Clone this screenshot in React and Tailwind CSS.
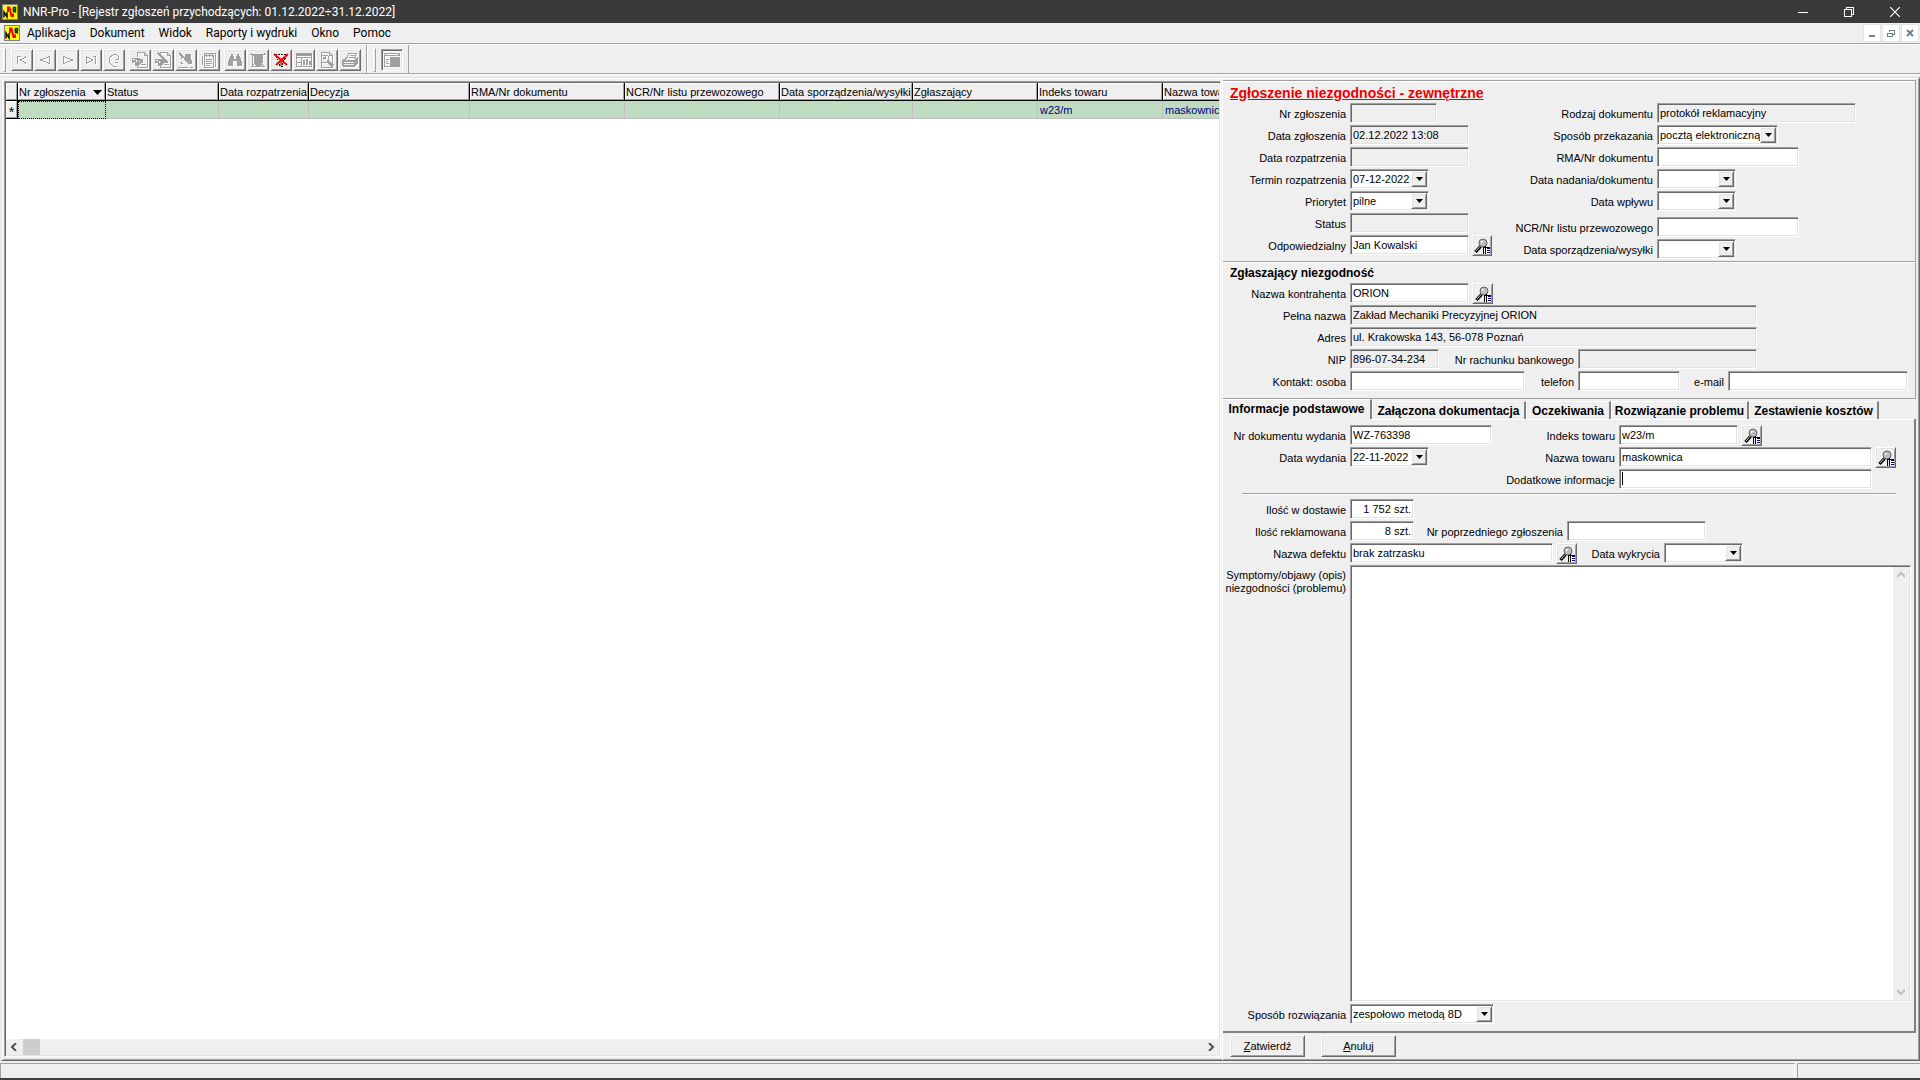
import React, { useId } from 'react';
import clsx from 'clsx';

const sunken =
  'border border-t-[#a0a0a0] border-l-[#a0a0a0] border-b-white border-r-white shadow-[inset_1px_1px_#696969,inset_-1px_-1px_#e3e3e3]';
const raised =
  'border border-t-white border-l-white border-b-[#696969] border-r-[#696969] shadow-[inset_1px_1px_#e3e3e3,inset_-1px_-1px_#a0a0a0]';

const menu = ['Aplikacja', 'Dokument', 'Widok', 'Raporty i wydruki', 'Okno', 'Pomoc'];

const columns = [
  { name: 'Nr zgłoszenia', width: 'w-[88px]', sorted: true },
  { name: 'Status', width: 'w-[113px]' },
  { name: 'Data rozpatrzenia', width: 'w-[90px]' },
  { name: 'Decyzja', width: 'w-[161px]' },
  { name: 'RMA/Nr dokumentu', width: 'w-[155px]' },
  { name: 'NCR/Nr listu przewozowego', width: 'w-[155px]' },
  { name: 'Data sporządzenia/wysyłki', width: 'w-[133px]' },
  { name: 'Zgłaszający', width: 'w-[125px]' },
  { name: 'Indeks towaru', width: 'w-[125px]', value: 'w23/m' },
  { name: 'Nazwa towaru', width: 'w-[125px]', value: 'maskownica' },
];

const tabs = [
  { name: 'Informacje podstawowe', width: 'w-[149px]' },
  { name: 'Załączona dokumentacja', width: 'w-[154px]' },
  { name: 'Oczekiwania', width: 'w-[85px]' },
  { name: 'Rozwiązanie problemu', width: 'w-[138px]' },
  { name: 'Zestawienie kosztów', width: 'w-[130px]' },
];

/* ---------- icons ---------- */

function Glyph({ children, className }) {
  return (
    <svg
      viewBox="0 0 16 16"
      className={clsx('h-4 w-4 shrink-0', className)}
      fill="none"
      stroke="currentColor"
      shapeRendering="crispEdges"
      aria-hidden="true"
    >
      {children}
    </svg>
  );
}

function AppIcon() {
  return (
    <svg viewBox="0 0 16 16" className="h-4 w-4 shrink-0" aria-hidden="true">
      <rect x=".5" y=".5" width="15" height="15" fill="#ffff00" stroke="#808080" />
      <path d="M2 13.500V8l3 5V8" fill="none" stroke="#000" strokeWidth="1.400" />
      <path d="M6 8V3.500h1.500l2 8.500h1.500V9.500" fill="none" stroke="#f00" strokeWidth="2" />
      <path d="M11.500 8.500V3.500h2v2.500h-2l2.500 2.500" fill="none" stroke="#003800" strokeWidth="1.500" />
    </svg>
  );
}

const toolIcons = {
  first: <path d="M3.500 4v8M12.500 4.500L6.500 8l6 3.500M3.500 4.500h3" />,
  prev: <path d="M12.500 4.500L3.500 8l9 3.500z" />,
  next: <path d="M3.500 4.500l9 3.500-9 3.500z" />,
  last: <path d="M12.500 4v8M3.500 4.500L9.500 8l-6 3.500zM9.500 4.500h3" />,
  refresh: <path d="M10.500 14.500H7.500L3.500 10.500V5.500L7.500 2.500h3l2 2v3M9.500 7.500h3.500M8.500 10.500h3" />,
  add: (
    <>
      <path d="M5.500 5V.5h7l3 3v12h-10V13M12.500 .5v3h3M9 12.500h5" />
      <path d="M0 6h8v1h3v4H9l-2 3H3v-3H0z" fill="currentColor" stroke="none" />
      <path d="M1 7h2v1H1zM4 8h1v2H4zM2 10h1v1H2zM7 9h1v1H7z" fill="#fff" stroke="none" />
    </>
  ),
  edit: (
    <>
      <path d="M5.500 5V.5h7l3 3v12h-10V13M12.500 .5v3h3M9 12.500h5" />
      <path d="M0 7h8v1h3v3H9l-2 3H3v-3H0z" fill="currentColor" stroke="none" />
      <path d="M3 1l10 10" strokeWidth="2" />
      <path d="M1 8h2v1H1zM4 9h1v2H4z" fill="#fff" stroke="none" />
    </>
  ),
  erase: (
    <>
      <path d="M1 1l11 10" strokeWidth="2" />
      <path d="M7 2h6v5l1 2v3h-4L6 8z" fill="currentColor" stroke="none" />
      <path d="M3 4v3M2 10l3 2M0 15.500h10M12 15.500h3" />
    </>
  ),
  notes: (
    <path d="M3.500 3.500h9v12h-9zM3.500 3V1.500h11v13M5.500 1v4M8.500 1v4M11.500 1v4M5 7.500h6M5 9.500h6M5 11.500h6M5 13.500h4M1.500 4v9" />
  ),
  find: (
    <path
      d="M4 2h2v2h1v3h2V4h1V2h2v2h1v2h1v3h1v5h-5V9H6v5H1V9h1V6h1V4h1z"
      fill="currentColor"
      stroke="none"
    />
  ),
  filter: (
    <>
      <path d="M0 2.500h16M1 14.500h14M2.500 2v12" />
      <path d="M4 3h9v7l-2 4H6l-2-4z" fill="currentColor" stroke="none" />
      <path d="M1 1l14 14M15 1L1 15" />
    </>
  ),
  table: (
    <>
      <path d="M.5 1.500h15v13H.5zM0 5.500h16M5.500 6v9M0 10.500h5" />
      <path d="M7 8h2v5H7zM10 7h2v6h-2zM13 9h2v4h-2zM1 2h14v2H1z" fill="currentColor" stroke="none" />
    </>
  ),
  preview: (
    <>
      <path d="M2.500 .5h8l3 3v12h-11zM10.500 .5v3h3" />
      <circle cx="6" cy="7" r="4" />
      <path d="M8 9l6 5" strokeWidth="3" />
      <path d="M4 7l3-2" strokeWidth="2" />
    </>
  ),
  print: (
    <>
      <path d="M4.500 7l2-5.500h8L12.500 7M8 3.500h5M7 5.500h5" />
      <path d="M0 8l4-2v2h8l4-3v6l-3 4H2l-2-1z" fill="currentColor" stroke="none" />
      <path d="M2 10.500h10M2 12.500h10" stroke="#efefef" />
    </>
  ),
};

const toolGroups = [
  [
    ['first', 'Pierwszy'],
    ['prev', 'Poprzedni'],
    ['next', 'Następny'],
    ['last', 'Ostatni'],
    ['refresh', 'Odśwież'],
  ],
  [
    ['add', 'Dodaj'],
    ['edit', 'Edytuj'],
    ['erase', 'Usuń'],
    ['notes', 'Notatki'],
  ],
  [
    ['find', 'Szukaj'],
    ['filter', 'Filtr'],
    ['clear', 'Wyłącz filtr'],
    ['table', 'Zestawienie'],
    ['preview', 'Podgląd'],
    ['print', 'Drukuj'],
  ],
];

function ClearFilterIcon() {
  return (
    <Glyph>
      <path d="M2 2.500h12M3.500 4v2l3 4v4h3v-4l3-4V4" stroke="#000" strokeDasharray="2 1" />
      <path d="M7 9h2v5H7z" fill="#808080" stroke="none" />
      <path d="M1 2l13 11M15 2L3 13" stroke="#f00" strokeWidth="2" shapeRendering="auto" />
    </Glyph>
  );
}

function LookupIcon() {
  return (
    <Glyph>
      <path d="M6.500 8.500L1.500 14" stroke="#000" strokeWidth="3.200" shapeRendering="auto" />
      <path d="M6 8.500L2 13" stroke="#d0d0d0" shapeRendering="auto" />
      <circle cx="9" cy="5" r="4" fill="#bdbdbd" stroke="#606060" shapeRendering="auto" />
      <path d="M7 5V3.500h2" stroke="#fff" />
      <path d="M9.500 9v7M11.500 8v8M9 9.500h7" stroke="#000" />
      <path d="M12 10h4v6h-4z" fill="#fff" stroke="none" />
      <path d="M13 10.500h3M13 12.500h3M13 14.500h3" stroke="#000080" />
    </Glyph>
  );
}

/* ---------- controls ---------- */

function Label({ htmlFor, width, children }) {
  return (
    <label htmlFor={htmlFor} className={clsx('shrink-0 pt-px text-right whitespace-nowrap', width)}>
      {children}
    </label>
  );
}

function Field({ label, labelWidth = 'w-[123px]', width, value = '', readOnly, right, caret }) {
  const id = useId();
  return (
    <div className="flex h-5 items-center gap-1">
      <Label htmlFor={id} width={labelWidth}>{label}</Label>
      <div className="relative flex">
        <input
          id={id}
          defaultValue={value}
          readOnly={readOnly}
          className={clsx(
            'h-5 px-0.5 pb-px outline-none',
            sunken,
            width,
            readOnly ? 'bg-[#efefef]' : 'bg-white',
            right && 'text-right'
          )}
        />
        {caret && <span className="absolute top-[3px] left-[3px] h-[13px] w-px bg-black" />}
      </div>
    </div>
  );
}

function Combo({ label, labelWidth = 'w-[123px]', width = 'w-[79px]', value = '' }) {
  const id = useId();
  return (
    <div className="flex h-5 items-center gap-1">
      <Label htmlFor={id} width={labelWidth}>{label}</Label>
      <div className="relative flex">
        <select id={id} className={clsx('h-5 appearance-none bg-white pl-0.5 outline-none', sunken, width)}>
          <option>{value}</option>
        </select>
        <span
          className={clsx(
            'pointer-events-none absolute inset-y-0.5 right-0.5 flex w-4 items-center justify-center bg-[#efefef]',
            raised
          )}
        >
          <svg viewBox="0 0 7 4" className="h-1 w-[7px]" aria-hidden="true">
            <path d="M0 0h7L3.500 4z" />
          </svg>
        </span>
      </div>
    </div>
  );
}

function Lookup({ label }) {
  return (
    <button aria-label={label} className={clsx('flex h-[21px] w-[21px] items-center justify-center', raised)}>
      <LookupIcon />
    </button>
  );
}

function Chevron({ d, className }) {
  return (
    <svg viewBox="0 0 8 8" className={clsx('h-2 w-2', className)} fill="none" stroke="currentColor" strokeWidth="2" aria-hidden="true">
      <path d={d} />
    </svg>
  );
}

/* ---------- window parts ---------- */

function TitleBar() {
  return (
    <header className="flex h-[23px] items-center justify-between bg-[#3a3a3a] pr-0.5 pl-0.5 font-[Roboto,sans-serif] text-xs text-white">
      <div className="flex items-center gap-[5px]">
        <AppIcon />
        <h1>NNR-Pro - [Rejestr zgłoszeń przychodzących: 01.12.2022÷31.12.2022]</h1>
      </div>
      <div className="flex">
        <button aria-label="Minimalizuj" className="flex h-5 w-[46px] items-center justify-center">
          <svg viewBox="0 0 10 10" className="h-2.5 w-2.5" stroke="#fff" shapeRendering="crispEdges"><path d="M0 5.500h10" /></svg>
        </button>
        <button aria-label="Przywróć" className="flex h-5 w-[46px] items-center justify-center">
          <svg viewBox="0 0 10 10" className="h-2.5 w-2.5" fill="none" stroke="#fff" shapeRendering="crispEdges"><path d="M.5 2.500h7v7h-7zM2.500 2V.5h7v7H8" /></svg>
        </button>
        <button aria-label="Zamknij" className="flex h-5 w-[46px] items-center justify-center">
          <svg viewBox="0 0 10 10" className="h-2.5 w-2.5" stroke="#fff" strokeWidth="1.200"><path d="M0 0l10 10M10 0L0 10" /></svg>
        </button>
      </div>
    </header>
  );
}

function MenuBar() {
  const child = 'flex h-[18px] w-[18px] items-center justify-center border border-[#e3e3e3] bg-white text-[#6f8094]';
  return (
    <nav className="flex h-[21px] items-center justify-between border-b border-[#a0a0a0] pr-px pl-1 font-[Roboto,sans-serif] text-xs">
      <div className="flex items-center">
        <AppIcon />
        <ul className="flex">
          {menu.map((item) => (
            <li key={item}>
              <button className="px-[7px]">{item}</button>
            </li>
          ))}
        </ul>
      </div>
      <div className="flex gap-px">
        <button aria-label="Minimalizuj okno" className={child}>
          <svg viewBox="0 0 8 8" className="h-2 w-2" fill="currentColor"><path d="M1 6h6v2H1z" /></svg>
        </button>
        <button aria-label="Przywróć okno" className={child}>
          <svg viewBox="0 0 8 8" className="h-2 w-2" fill="none" stroke="currentColor" shapeRendering="crispEdges"><path d="M.5 4h5v3.500h-5zM0 4h6M2.500 3V1h5v4H6" /></svg>
        </button>
        <button aria-label="Zamknij okno" className={child}>
          <svg viewBox="0 0 8 8" className="h-2 w-2" stroke="currentColor" strokeWidth="2"><path d="M1 1l6 6M7 1L1 7" /></svg>
        </button>
      </div>
    </nav>
  );
}

function Grip() {
  return <span className="h-6 w-[3px] border border-t-white border-l-white border-r-[#a0a0a0] border-b-[#a0a0a0]" />;
}

function ToolBar() {
  return (
    <div className="flex h-[30px] items-stretch border-t border-b border-t-white border-b-[#a0a0a0]">
      <div className="flex items-center gap-[5px] border-r border-[#a0a0a0] pt-0.5 pr-[5px] pl-[3px]">
        <Grip />
        <div className="flex gap-1">
          {toolGroups.map((group) => (
            <div key={group[0][0]} className="flex gap-px">
              {group.map(([name, label]) => (
                <button
                  key={name}
                  aria-label={label}
                  className={clsx('flex h-[22px] w-[22px] items-center justify-center text-[#a0a0a0]', raised)}
                >
                  {name === 'clear' ? (
                    <ClearFilterIcon />
                  ) : (
                    <Glyph className="drop-shadow-[1px_1px_0_#fff]">{toolIcons[name]}</Glyph>
                  )}
                </button>
              ))}
            </div>
          ))}
        </div>
      </div>
      <div className="flex items-center gap-[5px] border-l border-r border-l-white border-r-[#a0a0a0] pt-0.5 pr-[5px] pl-[5px]">
        <Grip />
        <button
          aria-label="Formularz"
          className={clsx('flex h-[22px] w-[22px] items-center justify-center bg-[#f7f7f7] text-[#a0a0a0]', sunken)}
        >
          <Glyph>
            <path d="M0 1h16v3H0zM6 5h10v10H6z" fill="currentColor" stroke="none" />
            <path d="M.5 4v10.500H6M2 7.500h3M2 9.500h2M2 11.500h3" />
            <path d="M1 2.500h13" stroke="#fff" />
          </Glyph>
        </button>
      </div>
    </div>
  );
}

function RequestGrid() {
  const head = 'h-[17px] border border-t-white border-l-white border-r-[#a0a0a0] border-b-[#a0a0a0] bg-[#efefef]';
  return (
    <div className={clsx('flex min-w-0 flex-1 flex-col overflow-hidden bg-white p-px', sunken)}>
      <div className="flex-1 overflow-hidden">
        <table className="w-[1282px] table-fixed border-separate border-spacing-0">
          <thead>
            <tr>
              <th className="w-3 border-r border-b border-black p-0">
                <div className={head} />
              </th>
              {columns.map((col) => (
                <th
                  key={col.name}
                  className={clsx('overflow-hidden border-r border-b border-black p-0 font-normal', col.width)}
                >
                  <div className={clsx('flex items-center justify-between pt-px pr-0.5 whitespace-nowrap', head)}>
                    {col.name}
                    {col.sorted && (
                      <svg viewBox="0 0 9 5" className="h-[5px] w-[9px]" aria-hidden="true">
                        <path d="M0 0h9L4.500 5z" />
                      </svg>
                    )}
                  </div>
                </th>
              ))}
            </tr>
          </thead>
          <tbody>
            <tr>
              <td className="border-r border-b border-black p-0">
                <div className={clsx(head, 'flex justify-center text-sm leading-5')}>*</div>
              </td>
              {columns.map((col) => (
                <td
                  key={col.name}
                  className={clsx(
                    'overflow-hidden bg-[#bfdbc0] text-[#000080]',
                    col.sorted
                      ? 'border border-dotted border-black p-0'
                      : 'border-r border-b border-[#c0c0c0] px-0.5 pt-px pb-0'
                  )}
                >
                  {col.value}
                </td>
              ))}
            </tr>
          </tbody>
        </table>
      </div>
      <div className="flex h-4 items-center justify-between bg-[#efefef] pr-1 pl-1 text-[#505050]">
        <div className="flex items-center gap-[5px]">
          <Chevron d="M6 0L2 4l4 4" />
          <span className="h-4 w-[17px] bg-[#cdcdcd]" />
        </div>
        <Chevron d="M2 0l4 4-4 4" />
      </div>
    </div>
  );
}

function DocumentSection() {
  return (
    <section className="border-t border-r border-b border-[#a0a0a0] pb-0.5 shadow-[inset_0_1px_#fff]">
      <h2 className="flex h-[22px] items-center pt-px pl-[7px] text-sm font-bold text-[#ee0000] underline">
        Zgłoszenie niezgodności - zewnętrzne
      </h2>
      <div className="flex gap-1">
        <div className="flex w-[269px] flex-col gap-0.5">
          <Field label="Nr zgłoszenia" width="w-[87px]" readOnly />
          <Field label="Data zgłoszenia" width="w-[119px]" value="02.12.2022 13:08" readOnly />
          <Field label="Data rozpatrzenia" width="w-[119px]" readOnly />
          <Combo label="Termin rozpatrzenia" value="07-12-2022" />
          <Combo label="Priorytet" value="pilne" />
          <Field label="Status" width="w-[119px]" readOnly />
          <div className="flex h-5 gap-[3px]">
            <Field label="Odpowiedzialny" width="w-[119px]" value="Jan Kowalski" />
            <Lookup label="Wybierz osobę" />
          </div>
        </div>
        <div className="flex flex-col gap-0.5">
          <Field label="Rodzaj dokumentu" labelWidth="w-[157px]" width="w-[199px]" value="protokół reklamacyjny" readOnly />
          <Combo label="Sposób przekazania" labelWidth="w-[157px]" width="w-[121px]" value="pocztą elektroniczną" />
          <Field label="RMA/Nr dokumentu" labelWidth="w-[157px]" width="w-[142px]" />
          <Combo label="Data nadania/dokumentu" labelWidth="w-[157px]" />
          <Combo label="Data wpływu" labelWidth="w-[157px]" />
          <div className="flex flex-col gap-0.5 pt-1">
            <Field label="NCR/Nr listu przewozowego" labelWidth="w-[157px]" width="w-[142px]" />
            <Combo label="Data sporządzenia/wysyłki" labelWidth="w-[157px]" />
          </div>
        </div>
      </div>
    </section>
  );
}

function ReporterSection() {
  return (
    <section className="border-t border-r border-b border-t-white border-r-[#a0a0a0] border-b-[#a0a0a0] pb-[7px]">
      <h3 className="flex h-5 items-center pl-[7px] text-xs font-bold">Zgłaszający niezgodność</h3>
      <div className="flex flex-col gap-0.5">
        <div className="flex h-5 gap-[3px]">
          <Field label="Nazwa kontrahenta" width="w-[119px]" value="ORION" />
          <Lookup label="Wybierz kontrahenta" />
        </div>
        <Field label="Pełna nazwa" width="w-[407px]" value="Zakład Mechaniki Precyzyjnej ORION" readOnly />
        <Field label="Adres" width="w-[407px]" value="ul. Krakowska 143, 56-078 Poznań" readOnly />
        <div className="flex gap-1">
          <Field label="NIP" width="w-[89px]" value="896-07-34-234" readOnly />
          <Field label="Nr rachunku bankowego" labelWidth="w-[131px]" width="w-[179px]" readOnly />
        </div>
        <div className="flex gap-1">
          <Field label="Kontakt: osoba" width="w-[175px]" />
          <Field label="telefon" labelWidth="w-[45px]" width="w-[102px]" />
          <Field label="e-mail" labelWidth="w-10" width="w-[180px]" />
        </div>
      </div>
    </section>
  );
}

function DetailTabs() {
  return (
    <>
      <div role="tablist" className="flex h-5 items-end text-xs font-bold">
        {tabs.map((tab, i) => (
          <button
            key={tab.name}
            role="tab"
            aria-selected={i === 0}
            className={clsx(
              'border-t border-r-2 border-t-white border-r-[#808080] text-center whitespace-nowrap',
              i === 0 ? 'h-5 pb-0.5' : 'h-[18px] border-l border-l-white',
              tab.width
            )}
          >
            {tab.name}
          </button>
        ))}
      </div>
      <div className="flex flex-1 flex-col border-r-2 border-b-2 border-[#808080]">
        <div className="flex">
          <span className="h-px w-[149px]" />
          <span className="h-px flex-1 bg-white" />
        </div>
        <div className="flex flex-1 flex-col pt-[5px] pb-[7px]">
          <div className="flex gap-1">
            <div className="flex w-[269px] flex-col gap-0.5">
              <Field label="Nr dokumentu wydania" width="w-[142px]" value="WZ-763398" />
              <Combo label="Data wydania" value="22-11-2022" />
            </div>
            <div className="flex flex-col gap-0.5">
              <div className="flex h-5 gap-[3px]">
                <Field label="Indeks towaru" labelWidth="w-[119px]" width="w-[119px]" value="w23/m" />
                <Lookup label="Wybierz indeks" />
              </div>
              <div className="flex h-5 gap-[3px]">
                <Field label="Nazwa towaru" labelWidth="w-[119px]" width="w-[253px]" value="maskownica" />
                <Lookup label="Wybierz towar" />
              </div>
              <Field label="Dodatkowe informacje" labelWidth="w-[119px]" width="w-[253px]" caret />
            </div>
          </div>
          <hr className="my-1 mr-[18px] ml-[19px] h-0.5 border-t border-b border-t-[#a0a0a0] border-b-white" />
          <div className="flex flex-1 flex-col gap-0.5">
            <Field label="Ilość w dostawie" width="w-16" value="1 752 szt." right />
            <div className="flex gap-1">
              <Field label="Ilość reklamowana" width="w-16" value="8 szt." right />
              <Field label="Nr poprzedniego zgłoszenia" labelWidth="w-[145px]" width="w-[139px]" />
            </div>
            <div className="flex h-5 gap-[3px]">
              <Field label="Nazwa defektu" width="w-[203px]" value="brak zatrzasku" />
              <Lookup label="Wybierz defekt" />
              <Combo label="Data wykrycia" labelWidth="w-20" />
            </div>
            <div className="flex flex-1 gap-1 pr-[3px]">
              <label htmlFor="symptomy" className="w-[123px] pt-1 text-right leading-[13px]">
                Symptomy/objawy (opis) niezgodności (problemu)
              </label>
              <div className={clsx('flex flex-1 bg-white p-px', sunken)}>
                <textarea id="symptomy" className="flex-1 resize-none px-0.5 outline-none" />
                <div className="flex w-4 flex-col items-center justify-between bg-[#efefef] py-1 text-[#bfbfbf]">
                  <Chevron d="M0 6l4-4 4 4" />
                  <Chevron d="M0 2l4 4 4-4" />
                </div>
              </div>
            </div>
            <Combo label="Sposób rozwiązania" width="w-[144px]" value="zespołowo metodą 8D" />
          </div>
        </div>
      </div>
    </>
  );
}

function StatusBar() {
  return (
    <footer className="flex h-[19px] gap-0.5 border-b-2 border-[#404040] pt-0.5">
      <div className="flex-1 border-t border-r border-l border-t-[#a0a0a0] border-r-white border-l-[#a0a0a0]" />
      <div className="w-[123px] border-t border-l border-[#a0a0a0]" />
    </footer>
  );
}

export default function App() {
  return (
    <div className="flex min-h-screen flex-col bg-[#efefef] font-['Liberation_Sans',Arial,sans-serif] text-[11px] leading-[14px] text-black">
      <TitleBar />
      <MenuBar />
      <ToolBar />
      <div className="h-[3px] border-t border-white" />
      <main className="ml-px flex flex-1 gap-px border border-t-[#e3e3e3] border-l-[#e3e3e3] border-r-[#696969] border-b-[#696969] shadow-[inset_1px_1px_#fff,inset_-1px_-1px_#a0a0a0]">
        <div className="flex min-w-0 flex-1 pt-[3px] pb-[3px] pl-0.5">
          <RequestGrid />
        </div>
        <div className="flex w-[697px] shrink-0 flex-col border-l border-white pt-0.5 pr-[3px] pb-[3px]">
          <DocumentSection />
          <ReporterSection />
          <DetailTabs />
          <div className="flex gap-4 pt-0.5 pl-[7px]">
            <button className={clsx('h-[22px] w-[75px]', raised)}>
              <u>Z</u>atwierdź
            </button>
            <button className={clsx('h-[22px] w-[75px]', raised)}>
              <u>A</u>nuluj
            </button>
          </div>
        </div>
      </main>
      <StatusBar />
    </div>
  );
}
